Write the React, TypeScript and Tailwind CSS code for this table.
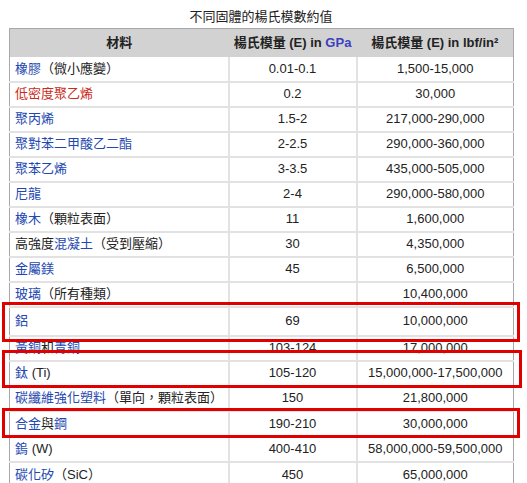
import React from 'react';

type Part = { t: string; c?: 'link' | 'red' };
type Row = { name: Part[]; gpa: string; psi: string; tall?: string };

const rows: Row[] = [
  { name: [{ t: '橡膠', c: 'link' }, { t: '（微小應變）' }], gpa: '0.01-0.1', psi: '1,500-15,000' },
  { name: [{ t: '低密度聚乙烯', c: 'red' }], gpa: '0.2', psi: '30,000' },
  { name: [{ t: '聚丙烯', c: 'link' }], gpa: '1.5-2', psi: '217,000-290,000' },
  { name: [{ t: '聚對苯二甲酸乙二酯', c: 'link' }], gpa: '2-2.5', psi: '290,000-360,000' },
  { name: [{ t: '聚苯乙烯', c: 'link' }], gpa: '3-3.5', psi: '435,000-505,000' },
  { name: [{ t: '尼龍', c: 'link' }], gpa: '2-4', psi: '290,000-580,000' },
  { name: [{ t: '橡木', c: 'link' }, { t: '（顆粒表面）' }], gpa: '11', psi: '1,600,000' },
  { name: [{ t: '高強度' }, { t: '混凝土', c: 'link' }, { t: '（受到壓縮）' }], gpa: '30', psi: '4,350,000' },
  { name: [{ t: '金屬鎂', c: 'link' }], gpa: '45', psi: '6,500,000' },
  { name: [{ t: '玻璃', c: 'link' }, { t: '（所有種類）' }], gpa: '', psi: '10,400,000' },
  { name: [{ t: '鋁', c: 'link' }], gpa: '69', psi: '10,000,000', tall: 'h-[29px] pt-[2px]' },
  { name: [{ t: '黃銅', c: 'link' }, { t: '和' }, { t: '青銅', c: 'link' }], gpa: '103-124', psi: '17,000,000' },
  { name: [{ t: '鈦', c: 'link' }, { t: ' (Ti)' }], gpa: '105-120', psi: '15,000,000-17,500,000' },
  { name: [{ t: '碳纖維強化塑料', c: 'link' }, { t: '（單向，顆粒表面）' }], gpa: '150', psi: '21,800,000' },
  { name: [{ t: '合金', c: 'link' }, { t: '與' }, { t: '鋼', c: 'link' }], gpa: '190-210', psi: '30,000,000', tall: 'h-[26px]' },
  { name: [{ t: '鎢', c: 'link' }, { t: ' (W)' }], gpa: '400-410', psi: '58,000,000-59,500,000' },
  { name: [{ t: '碳化矽', c: 'link' }, { t: '（SiC）' }], gpa: '450', psi: '65,000,000', tall: 'h-[26px]' },
];

const partClass = (c?: 'link' | 'red') =>
  c === 'link' ? 'text-[#2347b0]' : c === 'red' ? 'text-[#cc2a1a]' : 'text-[#222]';

export default function App() {
  return (
    <div
      className="relative w-[527px] h-[483px] overflow-hidden bg-white text-[13px] text-[#222]"
      style={{ fontFamily: '"Liberation Sans", Arial, "Noto Sans CJK TC", sans-serif' }}
    >
      <div className="pl-[9px] pt-[9px]">
        <div className="w-[504px] h-[19px] text-center leading-[16px]">不同固體的楊氏模數約值</div>
        <table className="w-[504px] table-fixed border-collapse border border-[#a8a8a8]">
          <colgroup>
            <col className="w-[219px]" />
            <col className="w-[128px]" />
            <col className="w-[157px]" />
          </colgroup>
          <thead>
            <tr className="h-[28px] bg-[#d2d2d2]">
              <th className="p-0 font-bold text-center">材料</th>
              <th className="p-0 font-bold text-center whitespace-nowrap">
                楊氏模量 (E) in <span className="text-[#3d3fbf]">GPa</span>
              </th>
              <th className="p-0 font-bold text-center whitespace-nowrap">楊氏模量 (E) in lbf/in²</th>
            </tr>
          </thead>
          <tbody>
            {rows.map((r, i) => (
              <tr key={i} className={r.tall ?? 'h-[25px]'}>
                <td className="p-0 pl-[5px] border-b-2 border-r-2 border-[#e2e2e2] whitespace-nowrap overflow-hidden">
                  {r.name.map((p, j) => (
                    <span key={j} className={partClass(p.c)}>
                      {p.t}
                    </span>
                  ))}
                </td>
                <td className="p-0 text-center border-b-2 border-r-2 border-[#e2e2e2]">{r.gpa}</td>
                <td className="p-0 text-center border-b-2 border-[#e2e2e2] whitespace-nowrap">{r.psi}</td>
              </tr>
            ))}
          </tbody>
        </table>
      </div>

      {/* highlight boxes */}
      <div className="absolute left-[2px] top-[302px] w-[518px] h-[40px] border-[3px] border-[#e00000]" />
      <div className="absolute left-[2px] top-[350px] w-[520px] h-[38px] border-[3px] border-[#e00000]" />
      <div className="absolute left-[2px] top-[408px] w-[518px] h-[30px] border-[3px] border-[#e00000]" />
    </div>
  );
}
